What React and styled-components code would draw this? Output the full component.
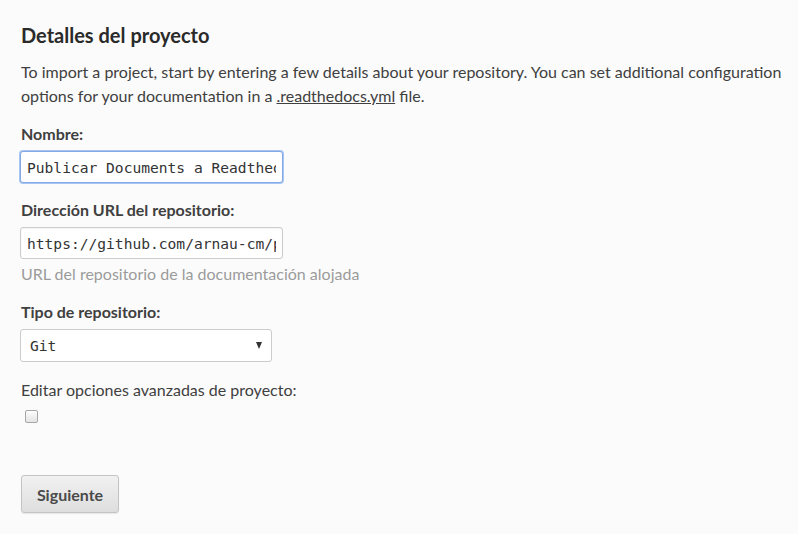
import React from "react";
import styled, { createGlobalStyle } from "styled-components";

const Global = createGlobalStyle`
  html, body { margin: 0; padding: 0; background: #fbfbfb; }
  body { font-family: Lato, "Open Sans", sans-serif; color: #404040; }
`;

const Page = styled.div`
  padding: 21px 8px 20px 21px;
  width: 798px;
  box-sizing: border-box;
`;

const Title = styled.h2`
  margin: 0 0 11px 0;
  font-size: 20px;
  line-height: 28px;
  font-weight: 700;
  color: #2a2a2a;
`;

const Intro = styled.p`
  margin: 0 0 14px 0;
  font-size: 16px;
  line-height: 24px;
  color: #404040;
  a { color: #404040; text-decoration: underline; }
`;

const Field = styled.div`
  display: flex;
  flex-direction: column;
  align-items: flex-start;
  margin-bottom: ${(p) => p.$mb ?? 15}px;
`;

const Label = styled.label`
  font-size: 16px;
  line-height: 24px;
  font-weight: ${(p) => (p.$plain ? 400 : 700)};
  color: #404040;
  margin-bottom: ${(p) => (p.$plain ? 0 : 5)}px;
`;

const Input = styled.input`
  box-sizing: border-box;
  width: ${(p) => p.$w}px;
  height: 32px;
  padding: 0 6px;
  margin: 0 0 0 -1px;
  font-family: "DejaVu Sans Mono", monospace;
  font-size: 14.6px;
  color: #333;
  background: #fff;
  border: 1px solid ${(p) => (p.$focus ? "#83a9e6" : "#cccccc")};
  border-radius: 3px;
  box-shadow: ${(p) => (p.$focus ? "0 0 0 1px #a8c4f0" : "inset 0 1px 2px rgba(0,0,0,0.06)")};
  outline: none;
`;

const Help = styled.div`
  font-size: 16px;
  line-height: 24px;
  color: #9b9b9b;
  margin-top: 3px;
`;

const SelectBox = styled.div`
  box-sizing: border-box;
  width: 252px;
  height: 33px;
  margin-left: -1px;
  border: 1px solid #cccccc;
  border-radius: 3px;
  background: #fff;
  display: flex;
  align-items: center;
  padding: 0 8px 0 9px;
  font-family: "DejaVu Sans Mono", monospace;
  font-size: 14.6px;
  color: #333;
`;

const Arrow = styled.span`
  margin-left: auto;
  width: 0;
  height: 0;
  border-left: 3.5px solid transparent;
  border-right: 3.5px solid transparent;
  border-top: 7px solid #333;
  margin-right: 1px;
`;

const Checkbox = styled.span`
  display: block;
  box-sizing: border-box;
  width: 13px;
  height: 13px;
  margin: 8px 0 0 4px;
  border: 1px solid #a7a7a7;
  border-radius: 2px;
  background: linear-gradient(#fdfdfd, #e4e4e4);
`;

const Button = styled.button`
  margin-top: 52px;
  width: 98px;
  height: 38px;
  font-family: Lato, sans-serif;
  font-size: 16px;
  font-weight: 700;
  color: #4a4a4a;
  background: linear-gradient(#f1f1f1, #dedede);
  border: 1px solid #c4c4c4;
  border-radius: 3px;
  box-shadow: 0 1px 1px rgba(0,0,0,0.08);
  padding: 0;
`;

export default function App() {
  return (
    <Page>
      <Global />
      <Title>Detalles del proyecto</Title>
      <Intro>
        To import a project, start by entering a few details about your repository. You can set additional configuration
        options for your documentation in a <a href="#">.readthedocs.yml</a> file.
      </Intro>
      <Field>
        <Label>Nombre:</Label>
        <Input $w={263} $focus readOnly value="Publicar Documents a Readthedocs" />
      </Field>
      <Field $mb={14}>
        <Label>Dirección URL del repositorio:</Label>
        <Input $w={263} readOnly value="https://github.com/arnau-cm/publicar-docs" />
        <Help>URL del repositorio de la documentación alojada</Help>
      </Field>
      <Field $mb={16}>
        <Label>Tipo de repositorio:</Label>
        <SelectBox>
          Git
          <Arrow />
        </SelectBox>
      </Field>
      <Field $mb={0}>
        <Label $plain>Editar opciones avanzadas de proyecto:</Label>
        <Checkbox />
      </Field>
      <Button>Siguiente</Button>
    </Page>
  );
}
